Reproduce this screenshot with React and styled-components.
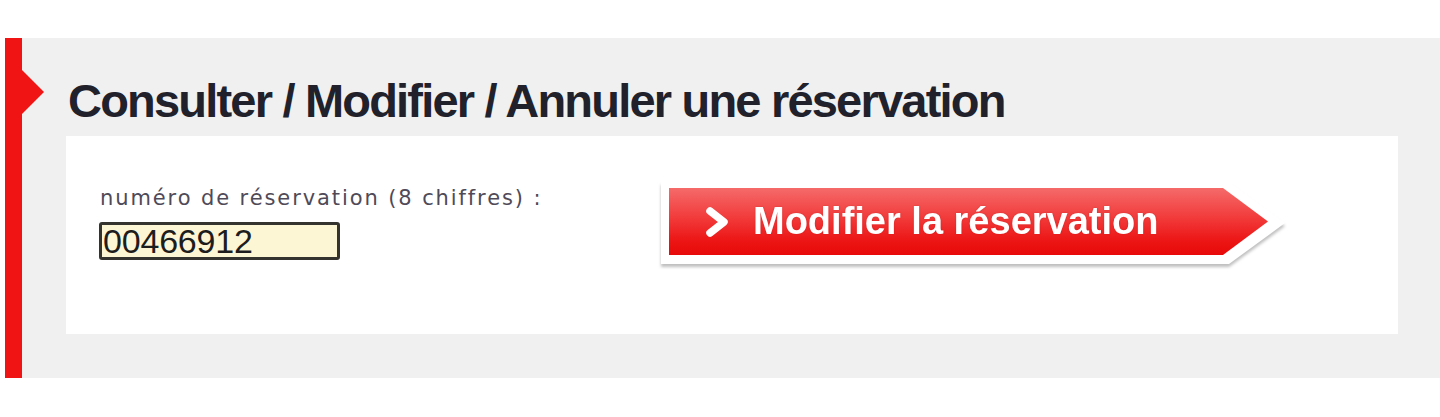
import React from 'react';
import styled, { createGlobalStyle } from 'styled-components';

const GlobalStyle = createGlobalStyle`
  html, body {
    margin: 0;
    padding: 0;
    background: #ffffff;
  }
  body {
    font-family: "Liberation Sans", Arial, sans-serif;
  }
`;

const Page = styled.div`
  width: 1440px;
  height: 417px;
  padding-top: 38px;
  box-sizing: border-box;
  overflow: hidden;
`;

const Panel = styled.section`
  display: flex;
  height: 340px;
  padding-left: 5px;
`;

const RedBar = styled.div`
  position: relative;
  width: 17px;
  flex-shrink: 0;
  background: #f01414;
  &::after {
    content: '';
    position: absolute;
    left: 17px;
    top: 32px;
    border-top: 22px solid transparent;
    border-bottom: 22px solid transparent;
    border-left: 22px solid #f01414;
  }
`;

const Content = styled.div`
  flex: 1;
  background: #f0f0f0;
  padding: 39px 42px 44px 44px;
  display: flex;
  flex-direction: column;
`;

const Title = styled.h1`
  margin: 0 0 12px 2px;
  font-family: "Liberation Sans", Arial, sans-serif;
  font-weight: bold;
  font-size: 47px;
  line-height: 47px;
  letter-spacing: -1.8px;
  color: #20212b;
`;

const Box = styled.div`
  flex: 1;
  background: #ffffff;
  display: flex;
  align-items: flex-start;
  padding: 46px 0 0 34px;
`;

const Field = styled.div`
  width: 561px;
  padding-top: 4px;
  display: flex;
  flex-direction: column;
`;

const Label = styled.label`
  font-family: "DejaVu Sans", Verdana, sans-serif;
  font-size: 21px;
  line-height: 24px;
  letter-spacing: 1.9px;
  color: #4f4a57;
`;

const Input = styled.input`
  margin: 12px 0 0 -1px;
  width: 241px;
  height: 38px;
  box-sizing: border-box;
  border: 3px solid #35332e;
  border-radius: 3px;
  background: #fdf6d4;
  padding: 0 0 0 1px;
  font-family: "Liberation Sans", Arial, sans-serif;
  font-size: 34px;
  line-height: 32px;
  letter-spacing: -0.2px;
  color: #1d1d1d;
  outline: none;
`;

const ButtonShadow = styled.div`
  filter: drop-shadow(0 3px 1.5px rgba(0, 0, 0, 0.25));
`;

const ButtonOutline = styled.div`
  background: #ffffff;
  padding: 6px 17px 9px 8px;
  clip-path: polygon(0 0, calc(100% - 56px) 0, 100% 50%, calc(100% - 56px) 100%, 0 100%);
`;

const Button = styled.button`
  display: flex;
  align-items: center;
  width: 599px;
  height: 67px;
  border: 0;
  padding: 0 0 0 36px;
  cursor: pointer;
  background: linear-gradient(#f56a6a 0%, #f23a3a 45%, #ec1414 80%, #e80a0a 100%);
  clip-path: polygon(0 0, calc(100% - 45px) 0, 100% 50%, calc(100% - 45px) 100%, 0 100%);
  font-family: "Liberation Sans", Arial, sans-serif;
  font-weight: bold;
  font-size: 38px;
  color: #ffffff;
  text-shadow: 0 0 2px rgba(160, 0, 0, 0.35);
`;

const Chevron = styled.svg`
  width: 25px;
  height: 32px;
  margin-right: 23px;
  flex-shrink: 0;
`;

const App = () => (
  <>
    <GlobalStyle />
    <Page>
      <Panel>
        <RedBar />
        <Content>
          <Title>Consulter / Modifier / Annuler une réservation</Title>
          <Box>
            <Field>
              <Label htmlFor="resa">numéro de réservation (8 chiffres) :</Label>
              <Input id="resa" type="text" defaultValue="00466912" />
            </Field>
            <ButtonShadow>
              <ButtonOutline>
                <Button type="button">
                  <Chevron viewBox="0 0 25 32">
                    <polyline
                      points="5,5 19,16 5,27"
                      fill="none"
                      stroke="#ffffff"
                      strokeWidth="7.5"
                      strokeLinecap="round"
                      strokeLinejoin="round"
                    />
                  </Chevron>
                  Modifier la réservation
                </Button>
              </ButtonOutline>
            </ButtonShadow>
          </Box>
        </Content>
      </Panel>
    </Page>
  </>
);

export default App;
